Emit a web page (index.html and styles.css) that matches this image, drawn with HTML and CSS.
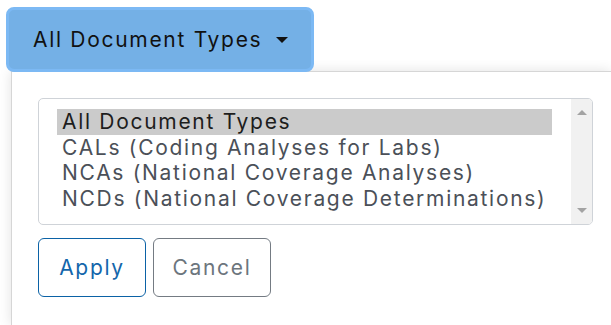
FILE: index.html
```html
<!DOCTYPE html>
<html lang="en">
  <head>
    <meta charset="UTF-8" />
    <title>Document Type Filter</title>
    <link rel="stylesheet" href="styles.css">
  </head>
  <body>
    <div class="filter">
      <button class="toggle">All Document Types <span class="caret"></span></button>
      <div class="menu">
        <div class="types">
          <ul class="list">
            <li class="item selected">All Document Types</li>
            <li class="item">CALs (Coding Analyses for Labs)</li>
            <li class="item">NCAs (National Coverage Analyses)</li>
            <li class="item">NCDs (National Coverage Determinations)</li>
          </ul>
          <div class="scrollbar">
            <span class="arrow up"></span>
            <span class="arrow down"></span>
          </div>
        </div>
        <div class="actions">
          <button class="btn apply">Apply</button>
          <button class="btn cancel">Cancel</button>
        </div>
      </div>
    </div>
  </body>
</html>
```

FILE: styles.css
```css
* {
  margin: 0;
  padding: 0;
  box-sizing: border-box;
  font-family: "Inter", sans-serif;
  letter-spacing: 1.7px;
}
body {
  background: white;
  height: 100vh;
  overflow: hidden;
}
.filter {
  height: 100%;
  padding: 7px 0 0 6px;
  display: flex;
  flex-direction: column;
}
.toggle {
  position: relative;
  z-index: 2;
  display: flex;
  align-items: center;
  width: 308px;
  height: 65px;
  padding: 0 0 0 24px;
  border: 3px solid #7cb9f4;
  border-radius: 8px;
  background: #74b0e6;
  color: #111;
  font-size: 21px;
  cursor: pointer;
}
.caret {
  margin-left: 14px;
  border-top: 6px solid #111;
  border-left: 6px solid transparent;
  border-right: 6px solid transparent;
}
.menu {
  flex: 1;
  margin: -1px 0 0 5px;
  padding: 26px;
  border: 1px solid #d6d6d6;
  border-right: none;
  border-bottom: none;
  background: white;
  box-shadow: 0 0 12px rgba(0, 0, 0, 0.12);
}
.types {
  display: flex;
  width: 555px;
  height: 127px;
  border: 1px solid #cfd3d8;
  border-radius: 5px;
  overflow: hidden;
}
.list {
  flex: 1;
  list-style: none;
  padding: 10px 19px 0 18px;
  font-size: 21px;
  color: #4b5058;
}
.item {
  height: 25.5px;
  line-height: 25.5px;
  padding-left: 5px;
  white-space: nowrap;
}
.item.selected {
  background: #cbcbcb;
  color: #1d1d1d;
}
.scrollbar {
  width: 21px;
  background: #f1f1f1;
  display: flex;
  flex-direction: column;
  justify-content: space-between;
  align-items: center;
  padding: 11px 0 11px;
}
.arrow {
  border-left: 5px solid transparent;
  border-right: 5px solid transparent;
}
.arrow.up {
  border-bottom: 5px solid #a3a3a3;
}
.arrow.down {
  border-top: 5px solid #a3a3a3;
}
.actions {
  display: flex;
  gap: 7px;
  margin-top: 13px;
}
.btn {
  height: 59px;
  border-radius: 6px;
  background: white;
  font-size: 21px;
  cursor: pointer;
}
.apply {
  width: 108px;
  border: 1px solid #0b62a6;
  color: #1366ab;
}
.cancel {
  width: 118px;
  border: 1px solid #747b83;
  color: #6c757d;
}
```
